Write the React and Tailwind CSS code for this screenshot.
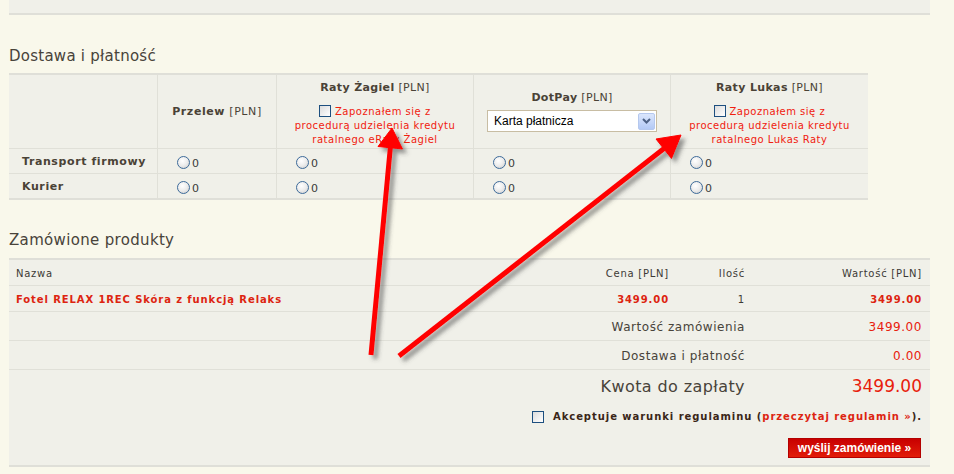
import React from 'react';

const rows = ['Transport firmowy', 'Kurier'];

function Radio() {
  return (
    <span className="inline-flex items-center gap-[2px] text-[11px] text-[#3a3a3a]">
      <span className="block w-[13px] h-[13px] rounded-full border border-[#3d6b9a] bg-[radial-gradient(circle_at_40%_35%,#ffffff_0%,#ececec_50%,#c9c9c9_100%)]"></span>
      <span className="mt-[3px] leading-none">0</span>
    </span>
  );
}

function Check() {
  return (
    <span className="inline-block align-[-2px] w-[12px] h-[12px] border border-[#1d4f7f] bg-[linear-gradient(135deg,#dcdcdc,#ffffff)]"></span>
  );
}

function RatyHeader({ title, lender }) {
  return (
    <div className="flex flex-col items-center pt-[6px] text-center">
      <div className="text-[11px] leading-[14px] text-[#4a4236] tracking-[0.35px]">
        <b>{title}</b> [PLN]
      </div>
      <div className="mt-[10px] text-[10px] leading-[14px] text-[#f0200f] tracking-[0.5px]">
        <Check /> Zapoznałem się z<br />
        procedurą udzielenia kredytu
        <br />
        ratalnego {lender}
      </div>
    </div>
  );
}

function Arrows() {
  return (
    <svg className="absolute left-0 top-0 pointer-events-none" width="954" height="474">
      <defs>
        <filter id="sh" x="-50%" y="-50%" width="200%" height="200%">
          <feDropShadow dx="4" dy="4" stdDeviation="2" floodColor="#444" floodOpacity="0.55" />
        </filter>
      </defs>
      <g filter="url(#sh)" fill="#ff0000" stroke="#ff0000">
        <line x1="371" y1="355" x2="390.5" y2="146" strokeWidth="5" />
        <polygon points="392,128 402.5,149 378,146.5" strokeWidth="1" />
        <line x1="399" y1="356" x2="664" y2="148.5" strokeWidth="5" />
        <polygon points="681,135 671.5,158.5 656,139" strokeWidth="1" />
      </g>
    </svg>
  );
}

export default function App() {
  return (
    <div className="relative w-[954px] h-[474px] overflow-hidden bg-[#f9f8eb] font-['DejaVu_Sans',sans-serif] text-[#4a4236]">
      <div className="ml-[9px] w-[921px]">
        <div className="h-[15px] bg-[#f0f0e9] border-b-2 border-[#dfdfd8]"></div>

        <h2 className="mt-[31px] text-[15px] leading-[18px] text-[#48433a] tracking-[0.25px] pt-[1px] h-[18px]">Dostawa i płatność</h2>

        <div className="mt-[9px] w-[859px] bg-[#f0f0e9] border-t-2 border-b-2 border-[#dfdfd8] grid grid-cols-[149px_119px_197px_197px_197px]">
          <div className="h-[74px] border-r border-b border-[#e0e0d8]"></div>
          <div className="h-[74px] border-r border-b border-[#e0e0d8] flex items-center justify-center text-[11px] tracking-[0.6px] pt-[2px]">
            <span>
              <b>Przelew</b> [PLN]
            </span>
          </div>
          <div className="h-[74px] border-r border-b border-[#e0e0d8]">
            <RatyHeader title="Raty Żagiel" lender="eRaty Żagiel" />
          </div>
          <div className="h-[74px] border-r border-b border-[#e0e0d8] flex flex-col items-center pt-[16px]">
            <div className="text-[11px] leading-[14px] tracking-[0.35px]">
              <b>DotPay</b> [PLN]
            </div>
            <div className="mt-[5px] w-[170px] h-[22px] bg-white border border-[#c8bda3] flex items-center justify-between pl-[6px] pr-[1px]">
              <span className="font-['Liberation_Sans',sans-serif] text-[12px] text-black">Karta płatnicza</span>
              <span className="w-[17px] h-[17px] rounded-[2px] border border-[#b5c8ee] bg-[linear-gradient(#dbe6fd,#b3c9f5)] flex items-center justify-center">
                <svg width="9" height="6" viewBox="0 0 9 6">
                  <path d="M1 1 L4.5 4.5 L8 1" stroke="#4d6185" strokeWidth="2" fill="none" />
                </svg>
              </span>
            </div>
          </div>
          <div className="h-[74px] border-b border-[#e0e0d8]">
            <RatyHeader title="Raty Lukas" lender="Lukas Raty" />
          </div>

          {rows.map((label, i) => (
            <React.Fragment key={label}>
              <div className={`${i === 0 ? 'h-[25px] border-b' : 'h-[24px]'} pl-[13px] pt-[3px] flex items-center text-[11px] font-bold tracking-[0.6px] border-r border-[#e0e0d8]`}>
                {label}
              </div>
              {[0, 1, 2, 3].map((c) => (
                <div
                  key={c}
                  className={`${i === 0 ? 'h-[25px] border-b' : 'h-[24px]'} pl-[19px] pt-[2px] flex items-center border-[#e0e0d8] ${c < 3 ? 'border-r' : ''}`}
                >
                  <Radio />
                </div>
              ))}
            </React.Fragment>
          ))}
        </div>

        <h2 className="mt-[31px] text-[15px] leading-[18px] text-[#48433a] tracking-[0.33px]">Zamówione produkty</h2>

        <div className="mt-[9px] bg-[#f0f0e9] border-t-2 border-b-2 border-[#dfdfd8]">
          <div className="h-[26px] pt-[2px] grid grid-cols-[1fr_110px_76px_177px] items-center border-b border-[#e0e0d8] text-[10px] text-[#3c3a35] tracking-[0.75px]">
            <div className="pl-[7px]">Nazwa</div>
            <div className="text-right pr-[8px]">Cena [PLN]</div>
            <div className="text-right pr-[8px]">Ilość</div>
            <div className="text-right pr-[8px]">Wartość [PLN]</div>
          </div>
          <div className="h-[26px] pt-[1px] grid grid-cols-[1fr_110px_76px_177px] items-center border-b border-[#e0e0d8] text-[10px] tracking-[0.9px]">
            <div className="pl-[7px] font-bold text-[#dd2410]">Fotel RELAX 1REC Skóra z funkcją Relaks</div>
            <div className="text-right pr-[8px] font-bold text-[#dd2410]">3499.00</div>
            <div className="text-right pr-[8px] text-[#3c3a35]">1</div>
            <div className="text-right pr-[8px] font-bold text-[#dd2410]">3499.00</div>
          </div>
          <div className="h-[29px] pt-[1px] grid grid-cols-[1fr_177px] items-center border-b border-[#e0e0d8] text-[12px] tracking-[0.55px]">
            <div className="text-right pr-[8px] text-[#48433a]">Wartość zamówienia</div>
            <div className="text-right pr-[8px] text-[#e8200c]">3499.00</div>
          </div>
          <div className="h-[29px] pt-[1px] grid grid-cols-[1fr_177px] items-center border-b border-[#e0e0d8] text-[12px] tracking-[0.55px]">
            <div className="text-right pr-[8px] text-[#48433a]">Dostawa i płatność</div>
            <div className="text-right pr-[8px] text-[#e8200c]">0.00</div>
          </div>
          <div className="h-[31px] pt-[2px] grid grid-cols-[1fr_177px] items-center">
            <div className="text-right pr-[8px] text-[16px] tracking-[0.4px] text-[#48433a]">Kwota do zapłaty</div>
            <div className="text-right pr-[8px] text-[17px] text-[#e8200c]">3499.00</div>
          </div>
          <div className="mt-[8px] flex justify-end items-center pr-[8px] text-[10px] font-bold text-[#3a2618] tracking-[0.95px]">
            <span className="inline-block w-[12px] h-[12px] mr-[9px] border border-[#1d4f7f] bg-[linear-gradient(135deg,#dcdcdc,#ffffff)]"></span>
            <span>
              Akceptuje warunki regulaminu (<span className="text-[#dd2410]">przeczytaj regulamin »</span>).
            </span>
          </div>
          <div className="mt-[14px] pb-[7px] flex justify-end pr-[9px]">
            <button className="w-[133px] h-[20px] bg-[linear-gradient(#c80000,#e21d0a)] border border-[#b30000] text-white font-['Liberation_Sans',sans-serif] font-bold text-[12px] leading-none">
              wyślij zamówienie »
            </button>
          </div>
        </div>
      </div>
      <Arrows />
    </div>
  );
}
